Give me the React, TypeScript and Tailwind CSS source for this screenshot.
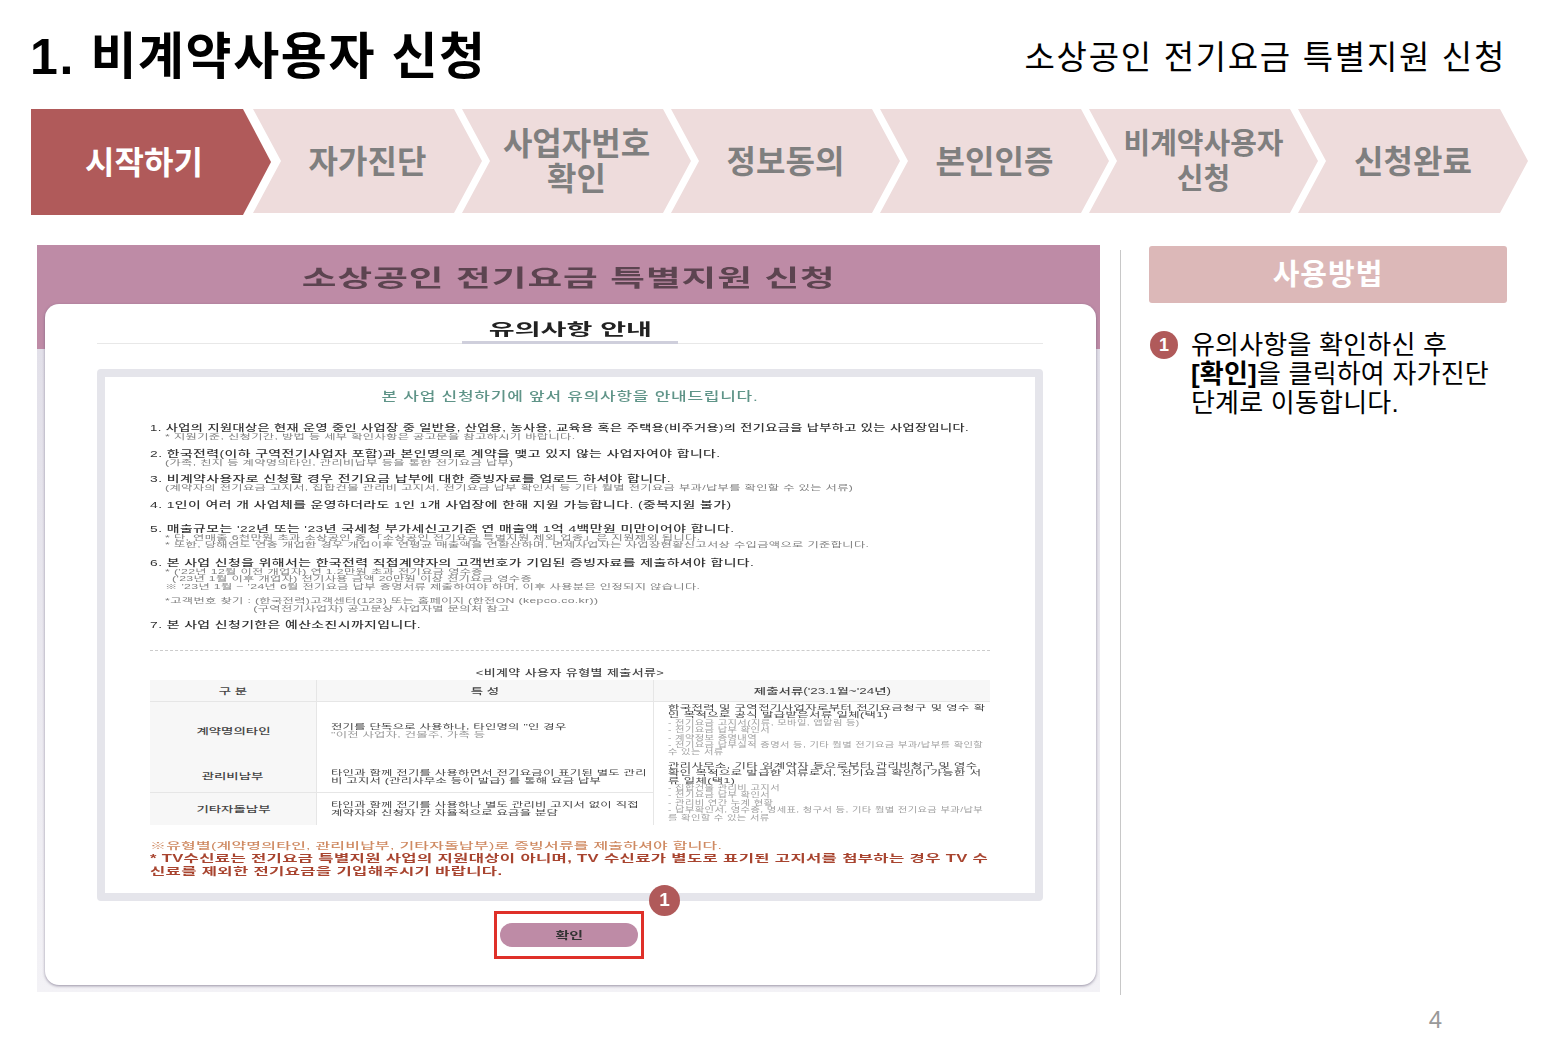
const steps = [
  { label: ["자가진단"], size: "text-[32px]", width: "w-[229px]" },
  { label: ["사업자번호", "확인"], size: "text-[32px]", width: "w-[229px]" },
  { label: ["정보동의"], size: "text-[32px]", width: "w-[229px]" },
  { label: ["본인인증"], size: "text-[32px]", width: "w-[229px]" },
  { label: ["비계약사용자", "신청"], size: "text-[29px]", width: "w-[229px]" },
  { label: ["신청완료"], size: "text-[32px]", width: "w-[230px]" },
];

function Main({
  children,
  className = "",
  scale = "scale-x-[1.54]",
}: {
  children: React.ReactNode;
  className?: string;
  scale?: string;
}) {
  return (
    <div className={`h-[10px] origin-left whitespace-nowrap text-[9px] leading-[10px] font-medium tracking-[0.28px] text-[#333333] ${scale} ${className}`}>
      {children}
    </div>
  );
}

function Sub({ children, className = "pl-[8.6px]" }: { children: React.ReactNode; className?: string }) {
  return (
    <div className={`h-[7.5px] origin-left scale-x-[1.75] whitespace-nowrap text-[7px] leading-[7.5px] tracking-[0.2px] text-[#808080] ${className}`}>
      {children}
    </div>
  );
}

function Badge({ className = "" }: { className?: string }) {
  return (
    <span className={`flex items-center justify-center rounded-full bg-[#b05a5a] font-bold text-white ${className}`}>
      1
    </span>
  );
}

export default function App() {
  return (
    <div className="min-h-screen w-[1553px] overflow-hidden bg-white font-['Liberation_Sans','Noto_Sans_CJK_KR',sans-serif] text-black">
      {/* HEADER */}
      <div className="flex h-[109px] items-center justify-between pt-[5px] pr-[47px] pl-[30px]">
        <h1 className="text-[50px] leading-none font-bold tracking-[1.6px]">1. 비계약사용자 신청</h1>
        <div className="text-[33px] leading-none tracking-[1.7px]">소상공인 전기요금 특별지원 신청</div>
      </div>

      {/* STEPS */}
      <div className="ml-[31px] flex h-[106px] items-start">
        <div className="flex h-[106px] w-[240px] items-center justify-center bg-[#b05a5a] pt-[2px] pr-[14px] text-[32px] font-bold text-white [clip-path:polygon(0_0,212px_0,100%_50%,212px_100%,0_100%)]">
          시작하기
        </div>
        {steps.map((step, i) => (
          <div
            key={step.label[0]}
            className={`flex h-[104px] flex-col items-center justify-center bg-[#eedcdc] pt-[2px] text-center leading-[35px] font-bold text-[#7f7f7f] [clip-path:polygon(0_0,calc(100%-28px)_0,100%_50%,calc(100%-28px)_100%,0_100%,28px_50%)] ${step.size} ${step.width} ${i === 0 ? "-ml-[18px]" : "-ml-[20px]"}`}
          >
            {step.label.map((line) => (
              <span key={line}>{line}</span>
            ))}
          </div>
        ))}
      </div>

      {/* BODY */}
      <div className="mt-[30px] flex items-start pl-[37px]">
        <div className="h-[747px] w-[1063px] overflow-hidden bg-[linear-gradient(#be8ba6_104px,#e2e0e9_104px,#f3f2f6_100%)]">
          <div className="flex h-[59px] items-center justify-center pt-[8px] text-[23px] font-bold tracking-[0.6px] text-[#5c4450] blur-[0.4px]">
            <span className="scale-x-[1.64]">소상공인 전기요금 특별지원 신청</span>
          </div>

          <div className="relative ml-[8px] h-[681px] w-[1051px] rounded-[14px] bg-white pt-[18px] pr-[53px] pl-[52px] shadow-[0_1px_3px_rgba(90,80,110,0.6)]">
            <div className="border-b border-[#e8e8e8]">
              <div className="mx-auto -mb-px h-[22px] w-[216px] border-b-[3px] border-[#cfcfdc] text-center text-[16px] leading-[16px] font-bold text-[#222222] blur-[0.3px]">
                <span className="inline-block scale-x-[1.76]">유의사항 안내</span>
              </div>
            </div>

            {/* NOTICE BOX */}
            <div className="mt-[25px] h-[532px] w-[946px] rounded-[4px] border-[8px] border-[#e5e5eb] px-[45px] pt-[14px] blur-[0.45px]">
              <div className="scale-x-[1.36] text-center text-[12.5px] leading-[12px] font-medium tracking-[0.55px] text-[#5f9488]">
                본 사업 신청하기에 앞서 유의사항을 안내드립니다.
              </div>

              <Main className="mt-[20px]" scale="scale-x-[1.46]">
                1. 사업의 지원대상은 현재 운영 중인 사업장 중 일반용, 산업용, 농사용, 교육용 혹은 주택용(비주거용)의 전기요금을 납부하고 있는 사업장입니다.
              </Main>
              <Sub>* 지원기준, 신청기간, 방법 등 세부 확인사항은 공고문을 참고하시기 바랍니다.</Sub>
              <Main className="mt-[8px]">2. 한국전력(이하 구역전기사업자 포함)과 본인명의로 계약을 맺고 있지 않는 사업자여야 합니다.</Main>
              <Sub>(가족, 친지 등 계약명의타인, 관리비납부 등을 통한 전기요금 납부)</Sub>
              <Main className="mt-[8px]">3. 비계약사용자로 신청할 경우 전기요금 납부에 대한 증빙자료를 업로드 하셔야 합니다.</Main>
              <Sub>(계약자의 전기요금 고지서, 집합건물 관리비 고지서, 전기요금 납부 확인서 등 기타 월별 전기요금 부과/납부를 확인할 수 있는 서류)</Sub>
              <Main className="mt-[8px]">4. 1인이 여러 개 사업체를 운영하더라도 1인 1개 사업장에 한해 지원 가능합니다. (중복지원 불가)</Main>
              <Main className="mt-[14px]">5. 매출규모는 '22년 또는 '23년 국세청 부가세신고기준 연 매출액 1억 4백만원 미만이어야 합니다.</Main>
              <Sub>* 단, 연매출 6천만원 초과 소상공인 중 「소상공인 전기요금 특별지원 제외 업종」은 지원제외 됩니다.</Sub>
              <Sub>* 또한, 당해연도 연중 개업한 경우 개업이후 연평균 매출액을 연환산하며, 면세사업자는 사업장현황신고서상 수입금액으로 기준합니다.</Sub>
              <Main className="mt-[9px]">6. 본 사업 신청을 위해서는 한국전력 직접계약자의 고객번호가 기입된 증빙자료를 제출하셔야 합니다.</Main>
              <Sub>* ('22년 12월 이전 개업자) 연 1.2만원 초과 전기요금 영수증</Sub>
              <Sub className="pl-[12.6px]">('23년 1월 이후 개업자) 전기사용 금액 20만원 이상 전기요금 영수증</Sub>
              <Sub>※ '23년 1월 ~ '24년 6월 전기요금 납부 증명서류 제출하여야 하며, 이후 사용분은 인정되지 않습니다.</Sub>
              <Sub className="mt-[7px] pl-[8.6px]">*고객번호 찾기 : (한국전력)고객센터(123) 또는 홈페이지 (한전ON (kepco.co.kr))</Sub>
              <Sub className="pl-[59px]">(구역전기사업자) 공고문상 사업자별 문의처 참고</Sub>
              <Main className="mt-[8px]">7. 본 사업 신청기한은 예산소진시까지입니다.</Main>

              <div className="mt-[20px] border-t border-dashed border-[#cccccc]" />
              <div className="mt-[17px] scale-x-[1.44] text-center text-[9px] leading-[10px] font-medium tracking-[0.3px] text-[#444444]">
                &lt;비계약 사용자 유형별 제출서류&gt;
              </div>

              {/* TABLE */}
              <div className="mt-[2px] grid h-[145px] grid-cols-[167px_337px_336px] grid-rows-[22px_91px_32px] text-[8.5px] leading-[8px] text-[#444444]">
                <div className="flex items-center justify-center border-r border-b border-[#e6e6e6] bg-[#f7f7f7] font-medium">
                  <span className="scale-x-[1.58]">구 분</span>
                </div>
                <div className="flex items-center justify-center border-r border-b border-[#e6e6e6] bg-[#f7f7f7] font-medium">
                  <span className="scale-x-[1.58]">특 성</span>
                </div>
                <div className="flex items-center justify-center border-b border-[#e6e6e6] bg-[#f7f7f7] font-medium">
                  <span className="scale-x-[1.58]">제출서류('23.1월~'24년)</span>
                </div>

                <div className="flex flex-col items-center justify-between border-r border-b border-[#e6e6e6] bg-[#f7f7f7] pt-[25px] pb-[12px] font-medium">
                  <span className="scale-x-[1.58]">계약명의타인</span>
                  <span className="scale-x-[1.58]">관리비납부</span>
                </div>
                <div className="flex flex-col justify-between border-r border-b border-[#e6e6e6] px-[14px] pt-[21px] pb-[7px] text-[7px] tracking-[0.15px] whitespace-nowrap">
                  <div className="origin-left scale-x-[1.76]">
                    <div>전기를 단독으로 사용하나, 타인명의 "인 경우</div>
                    <div className="text-[#999999]">"이전 사업자, 건물주, 가족 등</div>
                  </div>
                  <div className="origin-left scale-x-[1.76]">
                    타인과 함께 전기를 사용하면서 전기요금이 표기된 별도 관리
                    <br />
                    비 고지서 (관리사무소 등이 발급) 를 통해 요금 납부
                  </div>
                </div>
                <div className="row-span-2 px-[14px] pt-[2px] text-[7px] leading-[7.4px] tracking-[0.25px] whitespace-nowrap">
                  <div className="origin-left scale-x-[1.76]">
                    한국전력 및 구역전기사업자로부터 전기요금청구 및 영수 확
                    <br />
                    인 목적으로 공식 발급받은서류 일체(택1)
                  </div>
                  <div className="origin-left scale-x-[1.58] text-[6.5px] text-[#a0a0a0]">
                    - 전기요금 고지서(지류, 모바일, 앱알림 등)
                    <br />- 전기요금 납부 확인서
                    <br />- 계약정보 증명내역
                    <br />- 전기요금 납부실적 증명서 등, 기타 월별 전기요금 부과/납부를 확인할
                    <br />수 있는 서류
                  </div>
                  <div className="mt-[6px] origin-left scale-x-[1.76]">
                    관리사무소, 기타 임계약자 등으로부터 관리비청구 및 영수
                    <br />
                    확인 목적으로 발급한 서류로서, 전기요금 확인이 가능한 서
                    <br />류 일체(택1)
                  </div>
                  <div className="origin-left scale-x-[1.58] text-[6.5px] text-[#a0a0a0]">
                    - 집합건물 관리비 고지서
                    <br />- 전기요금 납부 확인서
                    <br />- 관리비 연간 누계 현황
                    <br />- 납부확인서, 영수증, 명세표, 청구서 등, 기타 월별 전기요금 부과/납부
                    <br />를 확인할 수 있는 서류
                  </div>
                </div>

                <div className="flex items-center justify-center border-r border-[#e6e6e6] bg-[#f7f7f7] font-medium">
                  <span className="scale-x-[1.58]">기타자돌납부</span>
                </div>
                <div className="flex flex-col justify-center border-r border-[#e6e6e6] px-[14px] text-[7px] tracking-[0.15px] whitespace-nowrap">
                  <div className="origin-left scale-x-[1.76]">
                    타인과 함께 전기를 사용하나 별도 관리비 고지서 없이 직접
                    <br />
                    계약자와 신청자 간 자율적으로 요금을 분담
                  </div>
                </div>
              </div>

              <div className="mt-[16px] origin-left scale-x-[1.77] whitespace-nowrap text-[9px] leading-[10px] font-medium tracking-[0.15px] text-[#cf8a62]">
                ※유형별(계약명의타인, 관리비납부, 기타자돌납부)로 증빙서류를 제출하셔야 합니다.
              </div>
              <div className="mt-px origin-left scale-x-[1.66] whitespace-nowrap text-[10px] leading-[13px] font-bold tracking-[0.2px] text-[#a8442f]">
                * TV수신료는 전기요금 특별지원 사업의 지원대상이 아니며, TV 수신료가 별도로 표기된 고지서를 첨부하는 경우 TV 수
                <br />
                신료를 제외한 전기요금을 기입해주시기 바랍니다.
              </div>
            </div>

            {/* CONFIRM BUTTON */}
            <div className="mt-[10px] ml-[397px] flex h-[48px] w-[150px] items-center justify-center border-[3px] border-[#df3029]">
              <div className="flex h-[24px] w-[138px] items-center justify-center rounded-full bg-[#be8ba6] text-[10px] font-bold text-[#333333] blur-[0.3px]">
                <span className="scale-x-[1.5]">확인</span>
              </div>
            </div>
            <Badge className="absolute top-[581px] left-[604px] h-[31px] w-[31px] text-[19px]" />
          </div>
        </div>

        <div className="mt-[5px] ml-[20px] h-[745px] w-px bg-[#c8c8c8]" />

        {/* SIDEBAR */}
        <div className="ml-[28px] w-[358px] pt-px">
          <div className="flex h-[57px] items-center justify-center rounded-[3px] bg-[#dcb8b8] pt-[2px] text-[29px] font-bold tracking-[1px] text-white">
            사용방법
          </div>
          <div className="mt-[28px] flex gap-[13px] pl-px">
            <Badge className="h-[28px] w-[28px] shrink-0 text-[18px]" />
            <p className="text-[26px] leading-[29px] tracking-[0.2px]">
              유의사항을 확인하신 후
              <br />
              <b>[확인]</b>을 클릭하여 자가진단
              <br />
              단계로 이동합니다.
            </p>
          </div>
        </div>
      </div>

      <div className="mt-[11px] pr-[111px] text-right text-[24px] leading-[28px] text-[#999999]">4</div>
    </div>
  );
}
